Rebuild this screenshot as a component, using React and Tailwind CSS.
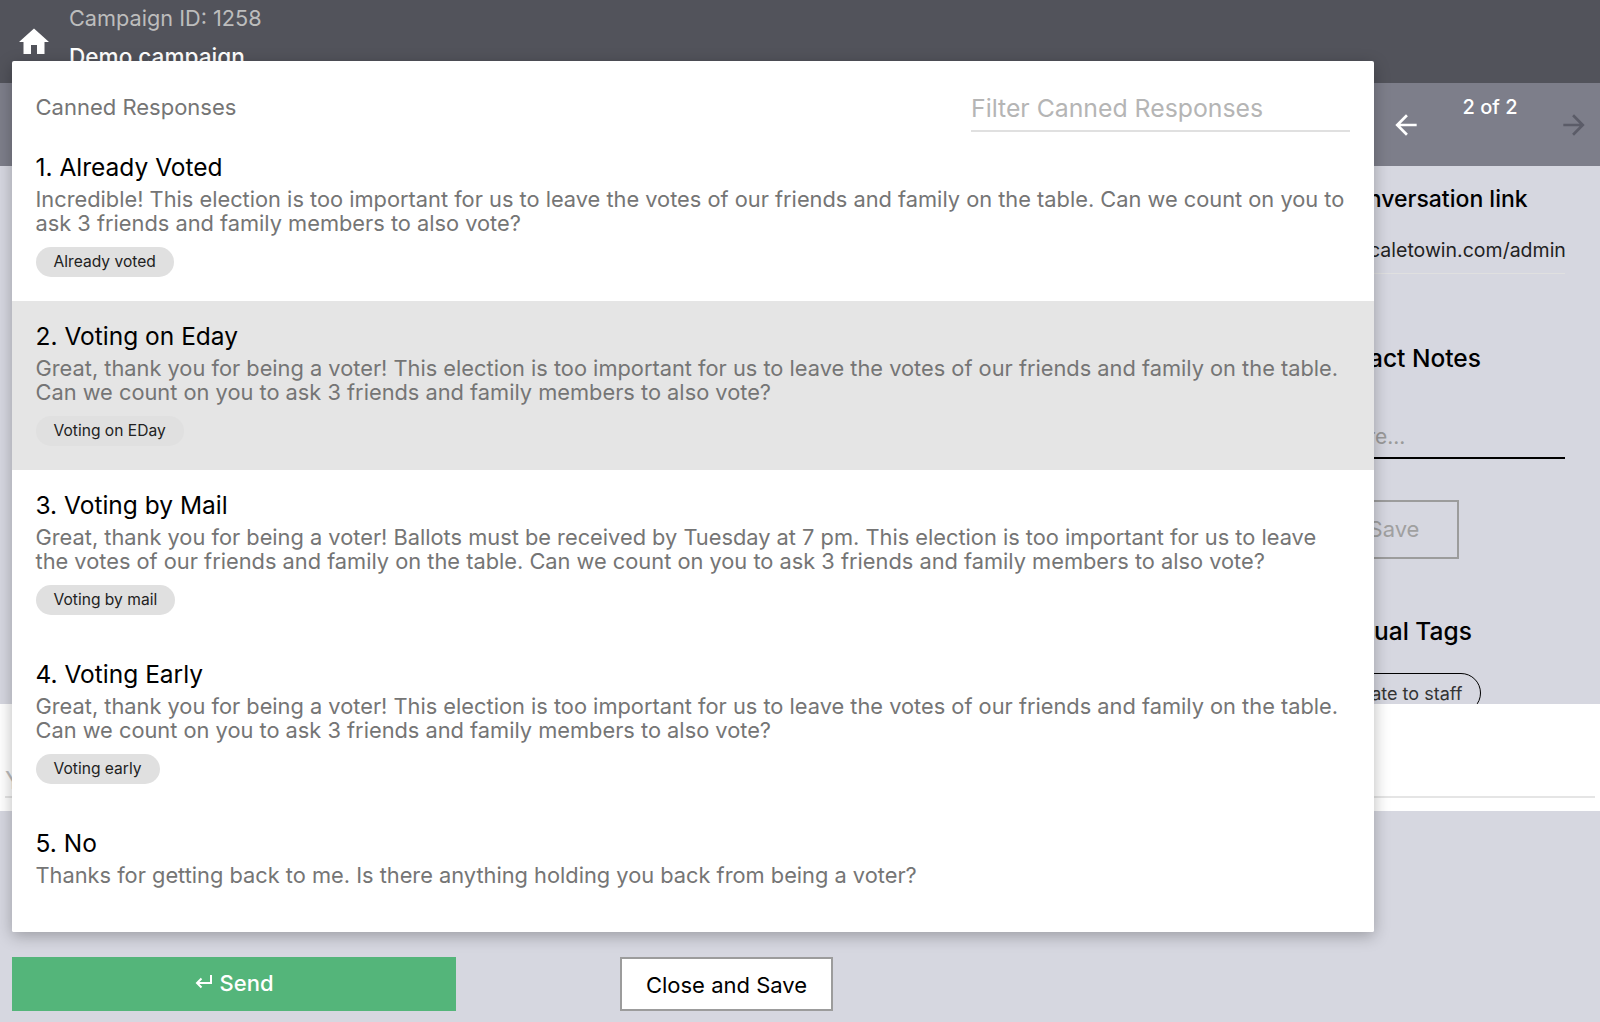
import { MdHome, MdArrowBack, MdArrowForward } from "react-icons/md";

const responses = [
    {
        title: "1. Already Voted",
        text: "Incredible! This election is too important for us to leave the votes of our friends and family on the table. Can we count on you to ask 3 friends and family members to also vote?",
        tag: "Already voted",
    },
    {
        title: "2. Voting on Eday",
        text: "Great, thank you for being a voter! This election is too important for us to leave the votes of our friends and family on the table. Can we count on you to ask 3 friends and family members to also vote?",
        tag: "Voting on EDay",
        active: true,
    },
    {
        title: "3. Voting by Mail",
        text: "Great, thank you for being a voter! Ballots must be received by Tuesday at 7 pm. This election is too important for us to leave the votes of our friends and family on the table. Can we count on you to ask 3 friends and family members to also vote?",
        tag: "Voting by mail",
    },
    {
        title: "4. Voting Early",
        text: "Great, thank you for being a voter! This election is too important for us to leave the votes of our friends and family on the table. Can we count on you to ask 3 friends and family members to also vote?",
        tag: "Voting early",
    },
    {
        title: "5. No",
        text: "Thanks for getting back to me. Is there anything holding you back from being a voter?",
    },
];

function ResponseRow({ title, text, tag, active }) {
    return (
        <div className={`pl-[23.5px] pr-6 pt-[20px] ${tag ? "pb-[24px]" : "pb-[47px]"} ${active ? "bg-[#e5e5e5]" : "bg-white"}`}>
            <h3 className="text-[24.5px] leading-[30px] mb-[6px] text-black">{title}</h3>
            <p className="text-[21.8px] leading-[23.5px] text-[#757575]">{text}</p>
            {tag && (
                <span className="inline-flex items-center h-[30px] mt-[12px] px-[18px] rounded-full bg-[#e0e0e0] text-[15.6px] text-[#222]">
                    {tag}
                </span>
            )}
        </div>
    );
}

export default function App() {
    return (
        <div className="relative h-[1022px] overflow-hidden flex flex-col bg-[#d6d7e0] font-['Inter','Liberation_Sans',sans-serif]">
            <header className="h-[83px] shrink-0 bg-[#52535b] flex">
                <MdHome className="w-[36px] h-[36px] ml-[16px] mt-[24px] text-white" />
                <div className="ml-[17px]">
                    <div className="text-[21.7px] leading-[36px] text-[#bdbdbd]">Campaign ID: 1258</div>
                    <div className="text-[22.6px] leading-[36px] mt-[3px] text-white font-medium">Demo campaign</div>
                </div>
            </header>

            <div className="h-[83px] shrink-0 bg-[#7d7e8a] flex justify-end">
                <div className="flex items-center text-white mr-[10px]">
                    <MdArrowBack className="w-[32px] h-[32px]" />
                    <span className="w-[136px] text-center text-[20px] font-medium -mt-[36px]">2 of 2</span>
                    <MdArrowForward className="w-[32px] h-[32px] text-[#5b5c68]" />
                </div>
            </div>

            <main className="h-[538px] shrink-0 flex justify-end overflow-hidden">
                <aside className="w-[320px] pr-[35px] text-black">
                    <h4 className="mt-[17px] ml-[57px] text-[23px] leading-[32px] font-medium whitespace-nowrap">Conversation link</h4>
                    <div className="mt-[20px] ml-[13px] h-[39px] border-b border-[#e0e0e0] overflow-hidden text-[19.5px] leading-[30px] whitespace-nowrap text-[#222]">
                        https://scaletowin.com/admin/1258
                    </div>
                    <h4 className="mt-[66px] ml-[33px] text-[24.5px] leading-[36px] font-medium whitespace-nowrap">Contact Notes</h4>
                    <div className="mt-[46px] pl-[5px] h-[37px] border-b-2 border-black text-[21px] leading-[30px] text-[#9a9a9a] whitespace-nowrap">
                        Enter here...
                    </div>
                    <button className="block mt-[41px] ml-[49px] w-[130px] h-[59px] border-2 border-[#9c9c9c] text-[22px] text-[#a0a0a0]">
                        Save
                    </button>
                    <h4 className="mt-[54px] ml-[43px] text-[24.5px] leading-[36px] font-medium whitespace-nowrap">Manual Tags</h4>
                    <span className="inline-flex mt-[24px] ml-[27px] h-[40px] items-center px-[18px] rounded-full border border-black text-[18px] text-[#333] whitespace-nowrap">
                        Escalate to staff
                    </span>
                </aside>
            </main>

            <div className="h-[107px] shrink-0 bg-white px-[5px] pt-[59px]">
                <div className="h-[35px] border-b-2 border-[#e5e5e5] text-[24px] text-[#bdbdbd]">Your message</div>
            </div>

            <footer className="flex-1 flex items-start px-[12px] pt-[146px]">
                <button className="w-[444px] h-[54px] pb-[2px] bg-[#54b57a] text-white text-[22px] font-medium flex items-center justify-center gap-[7px]">
                    <svg viewBox="0 0 18 14" className="w-[18px] h-[14px] -mt-[2px]" fill="none" stroke="currentColor" strokeWidth="2">
                        <path d="M16 0v8H2" />
                        <path d="M6.5 3.5 2 8l4.5 4.5" />
                    </svg>
                    Send
                </button>
                <button className="ml-[164px] w-[213px] h-[54px] pt-[2px] bg-white border-2 border-[#9c9c9c] text-black text-[22px]">
                    Close and Save
                </button>
            </footer>

            <div className="absolute left-[12px] top-[61px] w-[1362px] h-[871px] bg-white rounded-[2px] shadow-[0_4px_16px_rgba(0,0,0,0.28)] overflow-hidden">
                <div className="h-[71px] pl-[23.5px] pr-[24px] flex items-start justify-between">
                    <span className="mt-[32px] text-[22px] leading-[28px] text-[#757575]">Canned Responses</span>
                    <div className="mt-[26px] w-[379px] h-[45px] border-b-2 border-[#e0e0e0] text-[24.8px] leading-[43px] text-[#b5b5b5]">
                        Filter Canned Responses
                    </div>
                </div>
                {responses.map((r) => (
                    <ResponseRow key={r.title} {...r} />
                ))}
            </div>
        </div>
    );
}
